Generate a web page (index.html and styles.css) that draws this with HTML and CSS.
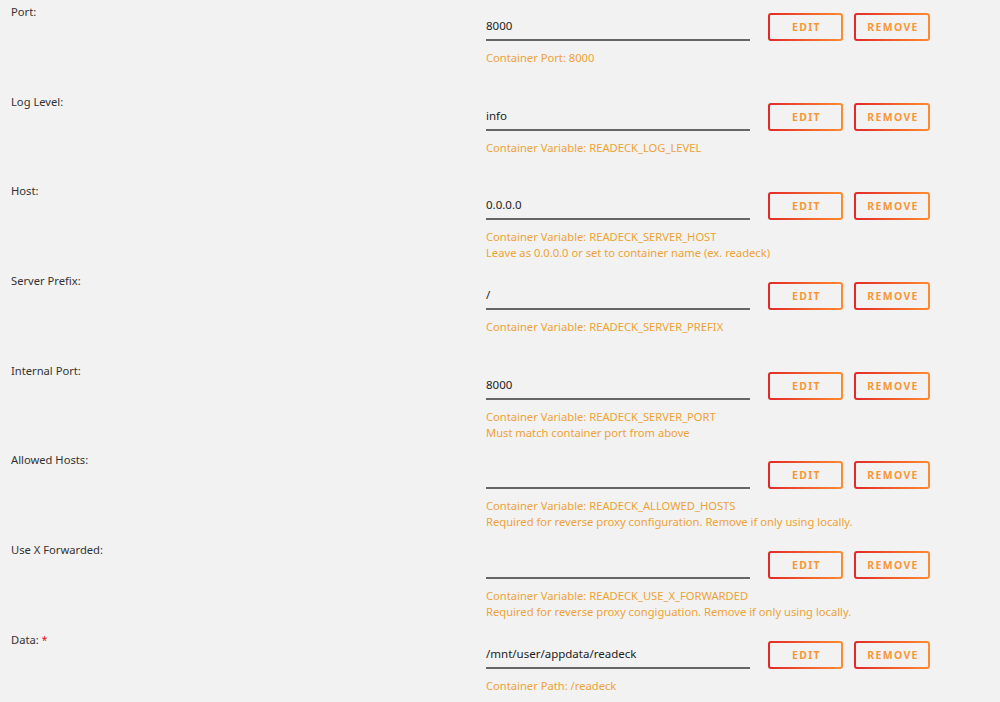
FILE: index.html
```html
<!DOCTYPE html>
<html>
<head>
  <title>Container Settings</title>
  <link rel="stylesheet" href="styles.css">
</head>
<body>
  <div class="settings">
    <!-- Port -->
    <div class="row">
      <div class="label">Port:</div>
      <div class="value">
        <div class="controls">
          <input type="text" class="field" value="8000">
          <button class="btn edit">EDIT</button>
          <button class="btn">REMOVE</button>
        </div>
        <div class="desc">Container Port: 8000</div>
      </div>
    </div>

    <!-- Log Level -->
    <div class="row">
      <div class="label">Log Level:</div>
      <div class="value">
        <div class="controls">
          <input type="text" class="field" value="info">
          <button class="btn edit">EDIT</button>
          <button class="btn">REMOVE</button>
        </div>
        <div class="desc">Container Variable: READECK_LOG_LEVEL</div>
      </div>
    </div>

    <!-- Host -->
    <div class="row">
      <div class="label">Host:</div>
      <div class="value">
        <div class="controls">
          <input type="text" class="field" value="0.0.0.0">
          <button class="btn edit">EDIT</button>
          <button class="btn">REMOVE</button>
        </div>
        <div class="desc">Container Variable: READECK_SERVER_HOST<br>Leave as 0.0.0.0 or set to container name (ex. readeck)</div>
      </div>
    </div>

    <!-- Server Prefix -->
    <div class="row">
      <div class="label">Server Prefix:</div>
      <div class="value">
        <div class="controls">
          <input type="text" class="field" value="/">
          <button class="btn edit">EDIT</button>
          <button class="btn">REMOVE</button>
        </div>
        <div class="desc">Container Variable: READECK_SERVER_PREFIX</div>
      </div>
    </div>

    <!-- Internal Port -->
    <div class="row">
      <div class="label">Internal Port:</div>
      <div class="value">
        <div class="controls">
          <input type="text" class="field" value="8000">
          <button class="btn edit">EDIT</button>
          <button class="btn">REMOVE</button>
        </div>
        <div class="desc">Container Variable: READECK_SERVER_PORT<br>Must match container port from above</div>
      </div>
    </div>

    <!-- Allowed Hosts -->
    <div class="row">
      <div class="label">Allowed Hosts:</div>
      <div class="value">
        <div class="controls">
          <input type="text" class="field" value="">
          <button class="btn edit">EDIT</button>
          <button class="btn">REMOVE</button>
        </div>
        <div class="desc">Container Variable: READECK_ALLOWED_HOSTS<br>Required for reverse proxy configuration. Remove if only using locally.</div>
      </div>
    </div>

    <!-- Use X Forwarded -->
    <div class="row">
      <div class="label">Use X Forwarded:</div>
      <div class="value">
        <div class="controls">
          <input type="text" class="field" value="">
          <button class="btn edit">EDIT</button>
          <button class="btn">REMOVE</button>
        </div>
        <div class="desc">Container Variable: READECK_USE_X_FORWARDED<br>Required for reverse proxy congiguation. Remove if only using locally.</div>
      </div>
    </div>

    <!-- Data -->
    <div class="row">
      <div class="label">Data: <span class="required">*</span></div>
      <div class="value">
        <div class="controls">
          <input type="text" class="field" value="/mnt/user/appdata/readeck">
          <button class="btn edit">EDIT</button>
          <button class="btn">REMOVE</button>
        </div>
        <div class="desc">Container Path: /readeck</div>
      </div>
    </div>
  </div>
</body>
</html>
```

FILE: styles.css
```css
body {
  font-family: "Noto Sans", Arial, sans-serif;
  font-size: 11.2px;
  background-color: #f2f2f2;
  color: #333;
  margin: 0;
}

.row {
  display: grid;
  grid-template-columns: 475px 1fr;
  height: 89.7px;
  padding-left: 11px;
}

.label {
  padding-top: 4px;
  line-height: 16px;
  color: #333;
}

.required {
  color: #f0000c;
  font-size: 10px;
  vertical-align: top;
}

.value {
  padding-top: 13px;
}

.controls {
  display: flex;
  align-items: center;
  height: 28px;
}

.field {
  width: 264px;
  height: 28px;
  box-sizing: border-box;
  padding: 0 0 1px 0;
  border: none;
  border-bottom: 2px solid #666;
  background: transparent;
  font-family: inherit;
  font-size: 11.5px;
  color: #222;
  outline: none;
}

.btn {
  height: 28px;
  box-sizing: border-box;
  width: 76px;
  margin-left: 11px;
  border: 2px solid transparent;
  border-radius: 3px;
  background: linear-gradient(#f2f2f2, #f2f2f2) padding-box,
              linear-gradient(90deg, #e22828, #ff8c2f) border-box;
  color: #f79739;
  font-family: inherit;
  font-size: 10.5px;
  font-weight: bold;
  letter-spacing: 1.3px;
  padding: 0 0 0 2px;
  cursor: pointer;
}

.btn.edit {
  width: 75px;
  margin-left: 18px;
}

.desc {
  margin-top: 9px;
  line-height: 16px;
  color: #eea236;
}
```
